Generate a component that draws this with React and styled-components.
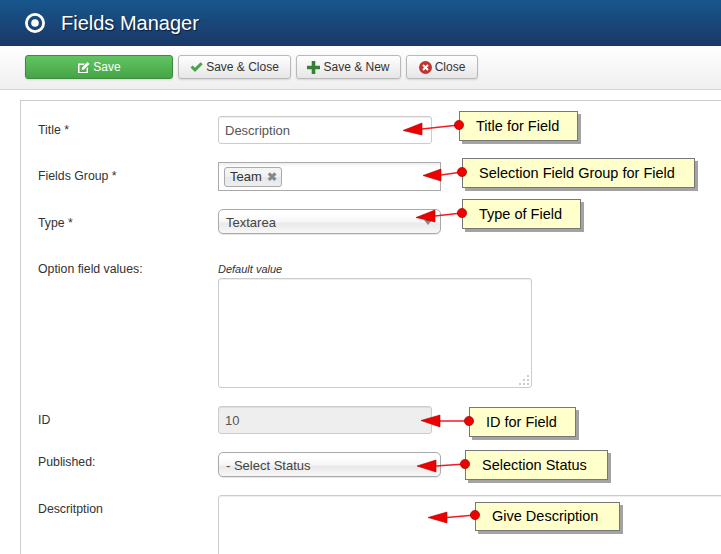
import React from "react";
import styled, { createGlobalStyle } from "styled-components";

const GlobalStyle = createGlobalStyle`
  * {
    margin: 0;
    padding: 0;
    box-sizing: border-box;
  }
  body {
    background: #fff;
    font-family: "Liberation Sans", Arial, sans-serif;
    overflow: hidden;
  }
`;

const Page = styled.div`
  position: relative;
  width: 721px;
  height: 554px;
  overflow: hidden;
`;

const Header = styled.header`
  height: 46px;
  display: flex;
  align-items: center;
  gap: 16px;
  padding: 0 0 1px 25px;
  background: linear-gradient(#17568c, #1a3867);
`;

const Heading = styled.h1`
  color: #fff;
  font-size: 20px;
  font-weight: 400;
  line-height: 24px;
  text-shadow: 1px 1px 1px #0b1c36;
`;

const Toolbar = styled.div`
  height: 44px;
  display: flex;
  align-items: flex-start;
  gap: 5px;
  padding: 9px 0 0 25px;
  background: linear-gradient(#fff, #efefef);
  border-bottom: 1px solid #d4d4d4;
`;

const Button = styled.button`
  width: ${(p) => p.$width}px;
  height: 24px;
  display: flex;
  align-items: center;
  justify-content: center;
  gap: 3px;
  font: 12px "Liberation Sans", Arial, sans-serif;
  color: ${(p) => (p.$primary ? "#fff" : "#333")};
  background: ${(p) =>
    p.$primary ? "linear-gradient(#62c462, #46a546)" : "linear-gradient(#fff, #e6e6e6)"};
  border: 1px solid ${(p) => (p.$primary ? "#3d8b3d" : "#b9b9b9")};
  border-radius: 3px;
  box-shadow: 0 1px 2px rgba(0, 0, 0, 0.12);
`;

const Panel = styled.main`
  width: 760px;
  margin: 10px 0 0 20px;
  padding: 15px 0 0 17px;
  border: 1px solid #ccc;
  border-width: 1px 0 0 1px;
  height: 600px;
`;

const Row = styled.div`
  display: grid;
  grid-template-columns: 180px 1fr;
  align-items: start;
  margin-bottom: 18px;
`;

const Label = styled.label`
  display: block;
  font-size: 12.3px;
  line-height: 18px;
  color: #333;
  padding-top: ${(p) => p.$pad ?? 5}px;
`;

const TextInput = styled.input`
  display: block;
  width: 214px;
  height: ${(p) => p.$height}px;
  padding: 1px 6px 0;
  font: 13px "Liberation Sans", Arial, sans-serif;
  color: #555;
  background: ${(p) => (p.$locked ? "#eee" : "#fff")};
  border: 1px solid #ccc;
  border-radius: 3px;
  box-shadow: inset 0 1px 1px rgba(0, 0, 0, 0.075);
  outline: none;
`;

const TagBox = styled.div`
  width: 223px;
  height: 29px;
  padding: 4px 5px;
  background: linear-gradient(#eee 1%, #fff 15%);
  border: 1px solid #aaa;
`;

const Tag = styled.span`
  display: inline-flex;
  align-items: center;
  gap: 5px;
  height: 20px;
  padding: 0 4px 1px 5px;
  font-size: 13px;
  color: #333;
  background: linear-gradient(#f4f4f4 20%, #f0f0f0 50%, #e8e8e8 52%, #eee);
  border: 1px solid #aaa;
  border-radius: 3px;
`;

const TagClose = styled.span`
  font-size: 12px;
  font-weight: 700;
  color: #888;
`;

const Select = styled.div`
  position: relative;
  width: 223px;
  height: 25px;
  padding: 1px 0 0 7px;
  display: flex;
  align-items: center;
  font-size: 13px;
  color: #444;
  background: linear-gradient(#fff 20%, #f6f6f6 50%, #e9e9e9 60%, #f8f8f8);
  border: 1px solid #aaa;
  border-radius: 5px;
  box-shadow: 0 1px 1px rgba(0, 0, 0, 0.1);
`;

const Caret = styled.span`
  position: absolute;
  right: 8px;
  top: 10px;
  border: 4px solid transparent;
  border-top: 5px solid #888;
`;

const DefaultCaption = styled.em`
  display: block;
  height: 17px;
  margin-top: 9px;
  font-size: 11px;
  line-height: 16px;
  color: #333;
`;

const TextBox = styled.div`
  position: relative;
  width: ${(p) => p.$width}px;
  height: ${(p) => p.$height}px;
  background: #fff;
  border: 1px solid #ccc;
  border-radius: 3px;
  box-shadow: inset 0 1px 1px rgba(0, 0, 0, 0.075);
`;

const Grip = styled.svg`
  position: absolute;
  right: 0;
  bottom: 0;
`;

const Callout = styled.div`
  position: absolute;
  left: ${(p) => p.$x}px;
  top: ${(p) => p.$y}px;
  width: ${(p) => p.$w}px;
  height: ${(p) => p.$h}px;
  padding: 0 0 1px 16px;
  display: flex;
  align-items: center;
  font-size: 14.5px;
  color: #000;
  background: #ffc;
  border: 1px solid #777;
  box-shadow: 3px 3px 0 #a3a3a3;
`;

const Overlay = styled.svg`
  position: absolute;
  left: 0;
  top: 0;
`;

const notes = [
  { text: "Title for Field", x: 459, y: 111, w: 119, h: 30, dot: [459, 125], tip: [403, 130.5], base: [422, 123, 135] },
  { text: "Selection Field Group for Field", x: 462, y: 158, w: 233, h: 30, dot: [462, 172], tip: [423, 175.5], base: [441, 169, 181] },
  { text: "Type of Field", x: 462, y: 199, w: 119, h: 30, dot: [462, 213], tip: [416, 217.5], base: [435, 210, 222] },
  { text: "ID for Field", x: 469, y: 407, w: 107, h: 30, dot: [469, 421], tip: [421, 420.5], base: [440, 415, 427] },
  { text: "Selection Status", x: 465, y: 450, w: 143, h: 30, dot: [465, 464], tip: [417, 466], base: [436, 460, 472] },
  { text: "Give Description", x: 475, y: 502, w: 145, h: 29, dot: [475, 515], tip: [428, 517.5], base: [447, 512, 523] },
];

const TargetIcon = () => (
  <svg width="20" height="20" viewBox="0 0 20 20">
    <circle cx="10" cy="10" r="8.6" fill="none" stroke="#fff" strokeWidth="2.8" />
    <circle cx="10" cy="10" r="3.8" fill="#fff" />
  </svg>
);

const EditIcon = () => (
  <svg width="13" height="13" viewBox="0 0 13 13">
    <path d="M1 2.5h7L6.5 4H2.5v7h7V7.5L11 6v6H1z" fill="#fff" />
    <path d="M5 6.5 10.5 1 12.5 3 7 8.5 4.7 9z" fill="#fff" />
  </svg>
);

const CheckIcon = () => (
  <svg width="13" height="12" viewBox="0 0 13 12">
    <path d="M0.5 6.5 2.6 4.4 5 6.8 10.6 1.2 12.7 3.3 5 11z" fill="#46a546" />
  </svg>
);

const PlusIcon = () => (
  <svg width="13" height="13" viewBox="0 0 13 13">
    <path d="M4.7 0h3.6v4.7H13v3.6H8.3V13H4.7V8.3H0V4.7h4.7z" fill="#378137" />
  </svg>
);

const CloseIcon = () => (
  <svg width="13" height="13" viewBox="0 0 13 13">
    <circle cx="6.5" cy="6.5" r="6.5" fill="#bd362f" />
    <path d="M4 4l5 5M9 4l-5 5" stroke="#fff" strokeWidth="2" />
  </svg>
);

export default function App() {
  return (
    <Page>
      <GlobalStyle />
      <Header>
        <TargetIcon />
        <Heading>Fields Manager</Heading>
      </Header>
      <Toolbar>
        <Button $primary $width={148}>
          <EditIcon />
          Save
        </Button>
        <Button $width={113}>
          <CheckIcon />
          Save &amp; Close
        </Button>
        <Button $width={105}>
          <PlusIcon />
          Save &amp; New
        </Button>
        <Button $width={72}>
          <CloseIcon />
          Close
        </Button>
      </Toolbar>
      <Panel>
        <Row>
          <Label>Title *</Label>
          <TextInput $height={28} readOnly value="Description" />
        </Row>
        <Row>
          <Label>Fields Group *</Label>
          <TagBox>
            <Tag>
              Team <TagClose>✖</TagClose>
            </Tag>
          </TagBox>
        </Row>
        <Row>
          <Label>Type *</Label>
          <Select>
            Textarea
            <Caret />
          </Select>
        </Row>
        <Row>
          <Label $pad={8}>Option field values:</Label>
          <div>
            <DefaultCaption>Default value</DefaultCaption>
            <TextBox $width={314} $height={110}>
              <Grip width="14" height="14" viewBox="0 0 14 14">
                <path d="M10 2h2v2h-2zM6 6h2v2H6zM10 6h2v2h-2zM2 10h2v2H2zM6 10h2v2H6zM10 10h2v2h-2z" fill="#ccc" />
              </Grip>
            </TextBox>
          </div>
        </Row>
        <Row>
          <Label>ID</Label>
          <TextInput $height={28} $locked readOnly value="10" />
        </Row>
        <Row>
          <Label $pad={1}>Published:</Label>
          <Select>- Select Status</Select>
        </Row>
        <Row>
          <Label>Descritption</Label>
          <TextBox $width={540} $height={120} />
        </Row>
      </Panel>
      {notes.map((n) => (
        <Callout key={n.text} $x={n.x} $y={n.y} $w={n.w} $h={n.h}>
          {n.text}
        </Callout>
      ))}
      <Overlay width="721" height="554" viewBox="0 0 721 554">
        {notes.map((n) => (
          <g key={n.text}>
            <line
              x1={n.base[0]}
              y1={(n.base[1] + n.base[2]) / 2}
              x2={n.dot[0]}
              y2={n.dot[1]}
              stroke="#f01c24"
              strokeWidth="1.5"
            />
            <polygon
              points={`${n.tip[0]},${n.tip[1]} ${n.base[0]},${n.base[1]} ${n.base[0]},${n.base[2]}`}
              fill="#ee0000"
              stroke="#a80000"
              strokeWidth="0.6"
            />
            <circle cx={n.dot[0]} cy={n.dot[1]} r="4.6" fill="#f00000" stroke="#a80000" strokeWidth="0.7" />
          </g>
        ))}
      </Overlay>
    </Page>
  );
}
